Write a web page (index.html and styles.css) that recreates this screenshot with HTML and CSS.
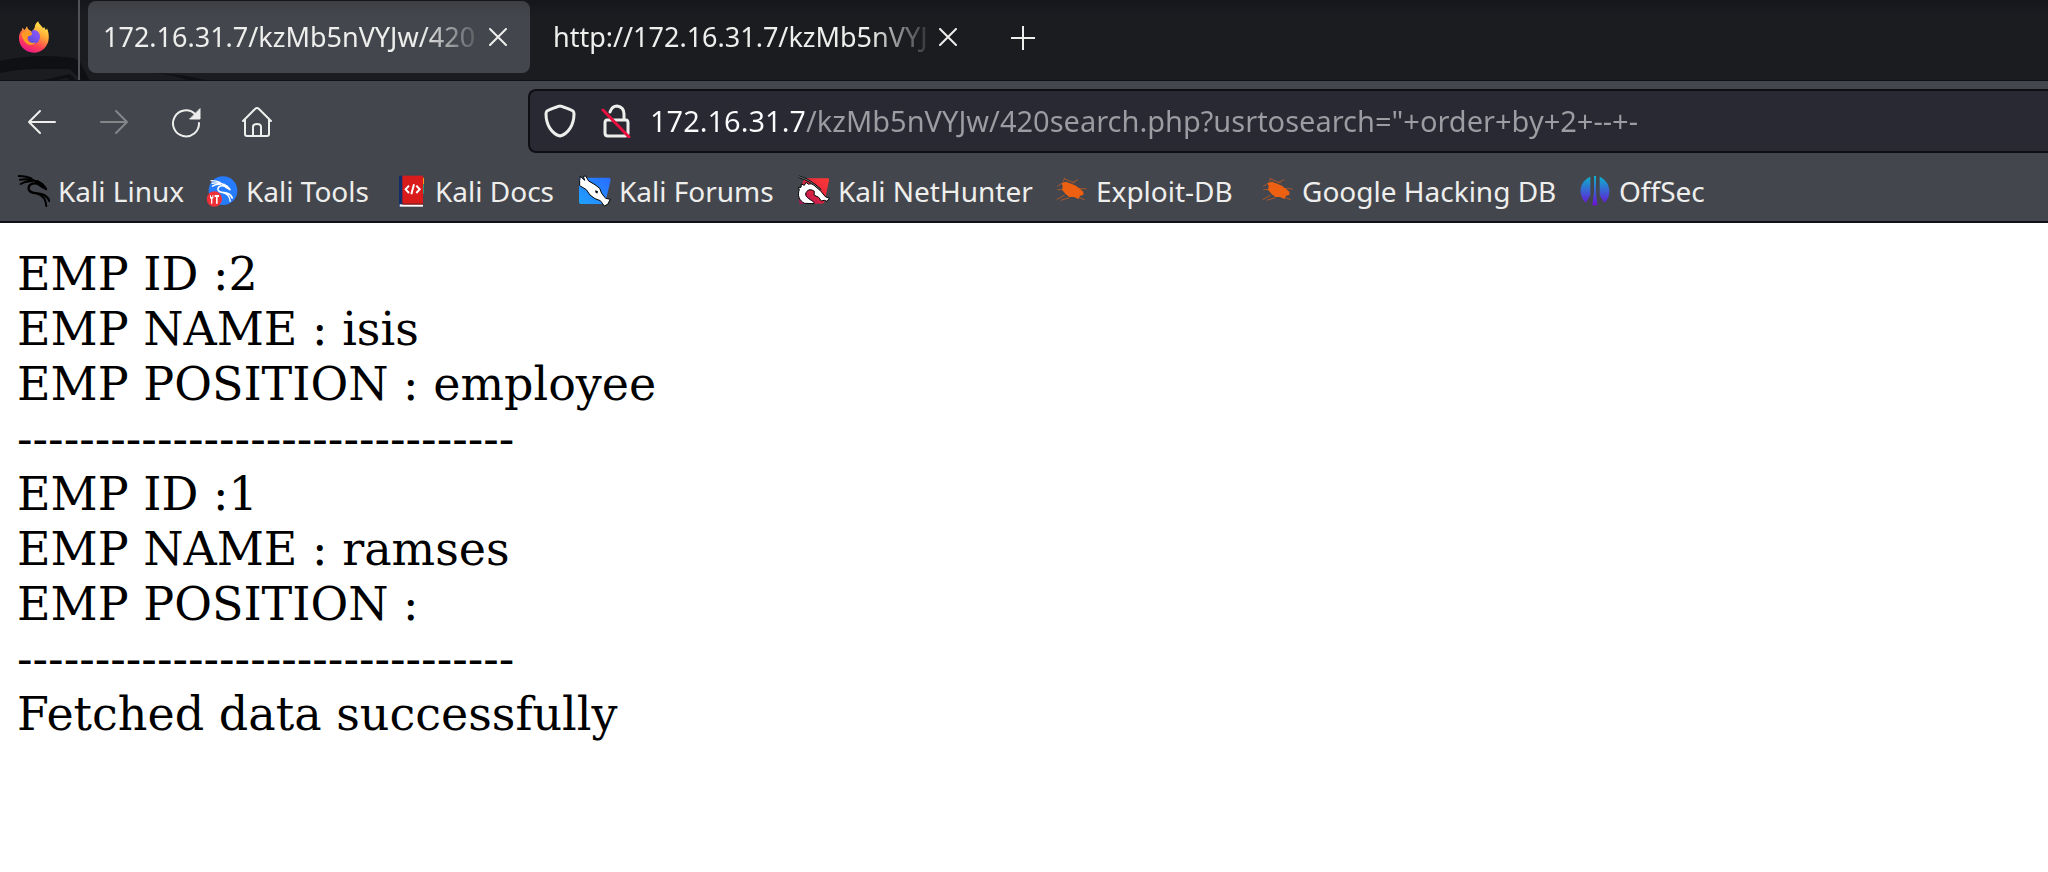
FILE: index.html
```html
<!DOCTYPE html>
<html lang="en">
<head>
<meta charset="utf-8">
<title>172.16.31.7/kzMb5nVYJw/420search.php</title>
<link rel="stylesheet" href="styles.css">
</head>
<body>
<svg class="defs" aria-hidden="true">
  <defs>
    <symbol id="dragon" viewBox="0 0 96 96">
      <g fill="none" stroke="currentColor" stroke-linecap="round" stroke-linejoin="round">
        <path stroke-width="6" d="M2 3 C18 4 30 6 40 10 M6 14 C18 12 30 12 40 15 M8 27 C18 20 30 18 42 19"/>
        <path stroke-width="7" d="M38 12 C50 18 62 22 72 27 L84 42 C76 37 68 34 64 29 C46 20 30 28 32 42 C35 58 58 53 72 58 C84 62 91 69 94 78"/>
        <path stroke-width="4" d="M58 17 C68 22 78 30 84 41"/>
        <path stroke-width="6" d="M58 56 C76 62 84 76 85 93"/>
      </g>
    </symbol>
    <symbol id="bug" viewBox="0 0 96 84">
      <g stroke="#a8572d" stroke-width="3" fill="none"><path d="M16 20 L4 28 M22 14 L26 2 M48 18 L66 8 M60 34 L92 36 M26 54 L2 68 M40 62 L14 70 M70 62 L86 68 M26 6 L56 18 M4 38 L20 38"/></g>
      <path fill="#ee6011" d="M16 18 L30 14 L46 20 L60 26 L72 36 L82 44 L82 54 L72 56 L68 66 L54 60 L40 60 L28 50 L18 38 L20 28 Z"/>
    </symbol>
    <linearGradient id="fxOuter" x1="0.8" y1="0" x2="0.3" y2="1"><stop offset="0" stop-color="#fff44f"/><stop offset=".4" stop-color="#ffa436"/><stop offset=".72" stop-color="#ff4055"/><stop offset="1" stop-color="#e31587"/></linearGradient>
    <linearGradient id="fxCore" x1="1" y1="0" x2="0" y2="1"><stop offset="0" stop-color="#9059ff"/><stop offset="1" stop-color="#5b4bd6"/></linearGradient>
    <linearGradient id="blue" x1="1" y1="0" x2="0" y2="1"><stop offset="0" stop-color="#2a6cff"/><stop offset="1" stop-color="#1fa2ff"/></linearGradient>
    <linearGradient id="red" x1="1" y1="0" x2="0" y2="1"><stop offset="0" stop-color="#ff3a34"/><stop offset=".5" stop-color="#e3263f"/><stop offset="1" stop-color="#a8135e"/></linearGradient>
    <linearGradient id="teal" gradientUnits="userSpaceOnUse" x1="0" y1="0" x2="0" y2="90"><stop offset="0" stop-color="#05bccb"/><stop offset="1" stop-color="#6a12d9"/></linearGradient>
  </defs>
</svg>
<header class="browser">
  <nav class="tabs" aria-label="Tabs">
    <svg class="wallpaper" viewBox="0 0 300 81" aria-hidden="true"><path fill="#0f1014" d="M0 61 Q35 53 74 58 L80 62 L90 81 L82 81 L70 69 L40 69 Q18 69 0 73 Z M40 81 L70 74 L77 81 H70 L67 78 L52 81 Z M155 73 Q185 74 208 81 H190 Q175 75 155 73 Z"/></svg>
    <button class="home-tab" aria-label="Firefox View">
      <svg width="32" height="32" viewBox="0 0 96 96" aria-hidden="true">
        <path fill="url(#fxOuter)" d="M50 20 C50 11 56 4 61 1 C61 9 70 12 75 22 L79 18 C80 22 81 23 84 28 L87 22 C104 64 78 95 48 95 C20 95 2 74 3 50 C3 40 7 32 12 28 L13 20 L20 27 C24 24 24 19 27 16 C28 24 34 28 42 32 Z"/>
        <path fill="url(#fxCore)" d="M30 42 C36 36 41 35 42 29 C52 23 67 34 66 48 C65 62 55 70 45 68 C33 66 28 53 30 42 Z"/>
        <path fill="#ff9a24" d="M10 39 C18 30 29 29 34 34 C42 35 44 37 41 42 C34 47 28 44 28 52 C28 64 43 69 53 64 C39 82 15 67 10 39 Z"/>
      </svg>
    </button>
    <div class="tab active">
      <button class="tab-title">172.16.31.7/kzMb5nVYJw/420</button>
      <button class="tab-close" aria-label="Close tab"><svg width="18" height="18" viewBox="0 0 18 18" aria-hidden="true"><path d="M1 1 L17 17 M17 1 L1 17"/></svg></button>
    </div>
    <div class="tab">
      <button class="tab-title">http://172.16.31.7/kzMb5nVYJ</button>
      <button class="tab-close" aria-label="Close tab"><svg width="18" height="18" viewBox="0 0 18 18" aria-hidden="true"><path d="M1 1 L17 17 M17 1 L1 17"/></svg></button>
    </div>
    <button class="new-tab" aria-label="New tab"><svg width="24" height="24" viewBox="0 0 24 24" aria-hidden="true"><path d="M12 0 V24 M0 12 H24"/></svg></button>
  </nav>
  <div class="toolbar">
    <div class="nav-buttons">
      <button aria-label="Back"><svg width="32" height="32" viewBox="0 0 32 32" aria-hidden="true"><path d="M29 16 H3 M14 5 L3 16 L14 27"/></svg></button>
      <button aria-label="Forward" disabled><svg width="32" height="32" viewBox="0 0 32 32" aria-hidden="true"><path d="M3 16 H29 M18 5 L29 16 L18 27"/></svg></button>
      <button aria-label="Reload"><svg width="32" height="32" viewBox="0 0 32 32" aria-hidden="true"><path d="M25 8 A13 13 0 1 0 29 17"/><path class="solid" d="M30 3 V13 H20 Z"/></svg></button>
      <button aria-label="Home"><svg width="32" height="32" viewBox="0 0 32 32" aria-hidden="true"><path d="M1 15 L13 3 Q15 1 17 3 L29 15 M3 13 V28 Q3 30 5 30 H25 Q27 30 27 28 V13 M11 30 V21 Q11 18 15 18 Q19 18 19 21 V30"/></svg></button>
    </div>
    <div class="urlbar">
      <svg width="32" height="34" viewBox="0 0 32 34" aria-hidden="true"><path d="M16 2 C17 2 28 6 29 7 Q30 8 30 10 C30 21 24 30 16 32 C8 30 2 21 2 10 Q2 8 3 7 C4 6 15 2 16 2 Z"/></svg>
      <svg width="32" height="34" viewBox="0 0 32 34" aria-hidden="true"><path d="M10 8 Q12 2 17 2 Q24 3 24 10 V16 M7 16 H26 Q28 16 28 19 V29 Q28 32 25 32 H8 Q5 32 5 29 V19 Q5 16 7 16"/><path class="slash" d="M3 6 L29 33"/></svg>
      <input class="url" type="text" aria-label="Address" spellcheck="false" value='172.16.31.7/kzMb5nVYJw/420search.php?usrtosearch="+order+by+2+--+-'>
    </div>
  </div>
  <nav class="bookmarks" aria-label="Bookmarks">
    <a href="#"><svg class="black" width="32" height="32" aria-hidden="true"><use href="#dragon"/></svg>Kali Linux</a>
    <a href="#"><svg class="white" width="32" height="32" viewBox="0 0 96 96" aria-hidden="true"><circle cx="51" cy="47" r="43" fill="#267cff"/><use href="#dragon" x="5" y="15" width="84" height="66"/><circle cx="25" cy="72" r="23" fill="#ee3038"/><path fill="#fff" d="M12 61 h3 v5 h4 v-5 h3 v8 l-3 3 v14 h-4 V72 l-3-3 Z M26 60 h13 v6 h-4 v20 h-5 V66 h-4 Z"/></svg>Kali Tools</a>
    <a href="#"><svg width="32" height="32" viewBox="0 0 96 96" aria-hidden="true"><path fill="#112e68" d="M12 2 H24 V96 H12 Z"/><path fill="#d91b1c" d="M22 2 H84 V86 H22 Z"/><path fill="#f39a25" d="M84 8 h3 v20 h-3 Z"/><path fill="#249b79" d="M84 28 h3 v28 h-3 Z"/><path fill="#fff" d="M14 88 H84 V95 H14 Z"/><path fill="#8f1117" d="M22 86 H84 V89 H22 Z"/><path fill="none" stroke="#fff" stroke-width="6" d="M42 32 L32 43 L42 54 M64 32 L74 43 L64 54 M57 28 L49 58"/></svg>Kali Docs</a>
    <a href="#"><svg width="32" height="32" viewBox="0 0 96 96" aria-hidden="true"><path fill="url(#blue)" d="M12 8 H90 Q96 9 95 15 L79 82 Q78 87 72 87 H6 Q0 87 0 81 V8 Z"/><path fill="#fff" stroke="#000" stroke-width="3" d="M2 16 L4 4 L17 16 L13 4 L20 3 L29 18 L48 29 L62 40 L68 55 L80 70 L94 73 L86 88 L76 93 L64 77 L48 71 L33 60 L22 44 L2 32 Z"/><path d="M49 46 l8 3 -2 7 -6-4 Z"/></svg>Kali Forums</a>
    <a href="#"><svg width="32" height="32" viewBox="0 0 96 96" aria-hidden="true"><path fill="url(#red)" d="M20 10 H90 Q94 10 93 16 L80 79 Q78 86 72 86 H6 Q2 86 4 76 L14 24 Z"/><path fill="#fff" stroke="#000" stroke-width="3" d="M20 85 C4 78 -3 60 4 44 L1 37 L9 37 L10 27 L19 31 L24 22 L32 28 C40 24 48 29 58 36 L68 48 L82 65 L94 70 L87 79 L79 76 L70 78 L62 67 L48 60 L49 49 C37 40 25 45 23 57 C22 68 39 74 48 82 V86 Z"/><path fill="none" stroke="#000" stroke-width="7" d="M2 5 C24 11 46 24 68 45"/><path fill="none" stroke="#bcc2c5" stroke-width="2" d="M2 5 C24 11 46 24 68 45"/></svg>Kali NetHunter</a>
    <a href="#"><svg width="32" height="28" aria-hidden="true"><use href="#bug"/></svg>Exploit-DB</a>
    <a href="#"><svg width="32" height="28" aria-hidden="true"><use href="#bug"/></svg>Google Hacking DB</a>
    <a href="#"><svg width="32" height="32" viewBox="0 0 96 96" aria-hidden="true"><path fill="url(#teal)" d="M34 5 V61 L20 83 C-2 65 -3 21 34 5 Z M62 5 C97 20 99 65 76 83 L62 61 Z M45 3 H51 V50 L55 91 H40 L45 50 Z"/></svg>OffSec</a>
  </nav>
</header>
<main class="page">
  <p>EMP ID :2<br>EMP NAME : isis<br>EMP POSITION : employee<br>--------------------------------<br>EMP ID :1<br>EMP NAME : ramses<br>EMP POSITION :<br>--------------------------------<br>Fetched data successfully</p>
</main>
</body>
</html>
```
FILE: styles.css
```css
* { box-sizing: border-box; }

body {
  margin: 0;
  background: #fff;
  color: #000;
}

.defs {
  position: absolute;
  width: 0;
  height: 0;
}

.browser {
  background: #44464d;
  border-bottom: 2px solid #101116;
  color: #eeeeec;
  font: 28px/40px "Noto Sans", sans-serif;
}

button {
  padding: 0;
  border: 0;
  background: none;
  color: inherit;
  font: inherit;
}

svg {
  display: block;
  flex: none;
}

button svg,
.urlbar svg {
  fill: none;
  stroke: currentColor;
  stroke-width: 2;
  stroke-linecap: round;
  stroke-linejoin: round;
}

.tabs {
  position: relative;
  display: flex;
  height: 81px;
  background: linear-gradient(#15161b, #1b1c20 16px);
  border-bottom: 1px solid #101116;
}

.wallpaper {
  position: absolute;
  left: 0;
  top: 0;
  height: 81px;
}

.home-tab {
  position: relative;
  width: 80px;
  padding: 0 0 6px 18px;
  border-right: 2px solid #505258;
}

.home-tab svg { stroke: none; }

.tab {
  position: relative;
  display: flex;
  align-items: center;
  width: 442px;
  height: 72px;
  margin: 1px 0 0 8px;
  padding: 0 19px 0 15px;
  border-radius: 8px;
}

.tab.active { background: linear-gradient(#3d3f45, #44464d 16px); }

.tab-title {
  flex: 1;
  font-size: 27px;
  white-space: nowrap;
  text-align: left;
  -webkit-mask-image: linear-gradient(to left, transparent, #000 64px);
  mask-image: linear-gradient(to left, transparent, #000 64px);
}

.tab-close { padding: 0 4px; }

.new-tab { padding: 0 32px 4px 31px; }

.nav-buttons svg,
.urlbar svg { stroke-width: 3; }

.nav-buttons svg { stroke-width: 2; }

.toolbar {
  display: flex;
  padding-top: 8px;
}

.nav-buttons {
  display: flex;
  gap: 40px;
  width: 528px;
  padding: 2px 0 0 26px;
}

.nav-buttons button:disabled { color: #85868a; }

.nav-buttons .solid {
  fill: currentColor;
  stroke-width: 1;
}

.urlbar {
  display: flex;
  flex: 1;
  align-items: center;
  gap: 24px;
  height: 64px;
  padding-left: 14px;
  background: #282933;
  border: 2px solid #0e0f14;
  border-right: 0;
  border-radius: 8px 0 0 8px;
}

.urlbar .slash { stroke: #e8103e; }

.url {
  flex: 1;
  min-width: 0;
  margin-left: -6px;
  padding: 0;
  border: 0;
  outline: 0;
  background: linear-gradient(to right, #fbfbfe 154px, #9c9da2 154px);
  -webkit-background-clip: text;
  background-clip: text;
  color: transparent;
  font: inherit;
  font-size: 29px;
}

.bookmarks {
  display: grid;
  grid-template-columns: 188px 189px 184px 219px 258px 206px 317px 1fr;
  align-items: center;
  height: 68px;
  padding: 8px 0 0 18px;
}

.bookmarks a {
  display: flex;
  align-items: center;
  gap: 8px;
  color: inherit;
  text-decoration: none;
  white-space: nowrap;
}

.black { color: #000; }
.white { color: #fff; }

.page {
  padding: 24px 17px;
  font: 46px/55px "DejaVu Serif", serif;
}

.page p { margin: 0; }
```
